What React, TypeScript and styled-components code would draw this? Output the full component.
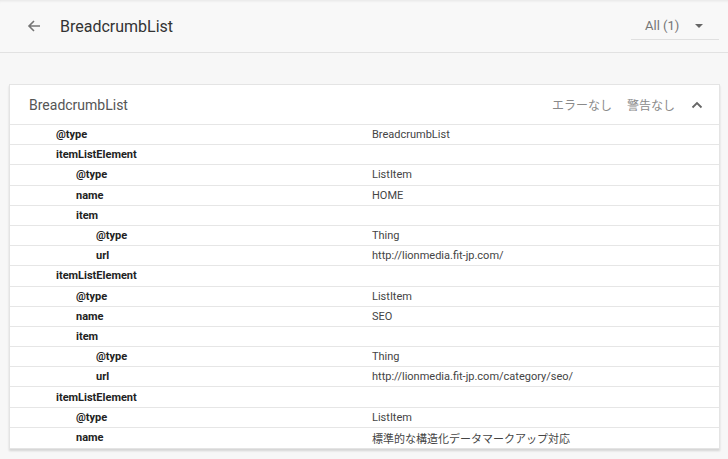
import styled, { createGlobalStyle } from 'styled-components'

const GlobalStyle = createGlobalStyle`
  html, body {
    margin: 0;
    padding: 0;
    background: #f7f7f7;
    font-family: Roboto, "Noto Sans CJK JP", sans-serif;
  }
`

interface rowData {
  label: string
  value?: string
  level: number
}

const ROWS: rowData[] = [
  { label: '@type', value: 'BreadcrumbList', level: 0 },
  { label: 'itemListElement', level: 0 },
  { label: '@type', value: 'ListItem', level: 1 },
  { label: 'name', value: 'HOME', level: 1 },
  { label: 'item', level: 1 },
  { label: '@type', value: 'Thing', level: 2 },
  { label: 'url', value: 'http://lionmedia.fit-jp.com/', level: 2 },
  { label: 'itemListElement', level: 0 },
  { label: '@type', value: 'ListItem', level: 1 },
  { label: 'name', value: 'SEO', level: 1 },
  { label: 'item', level: 1 },
  { label: '@type', value: 'Thing', level: 2 },
  { label: 'url', value: 'http://lionmedia.fit-jp.com/category/seo/', level: 2 },
  { label: 'itemListElement', level: 0 },
  { label: '@type', value: 'ListItem', level: 1 },
  { label: 'name', value: '標準的な構造化データマークアップ対応', level: 1 },
]

const Page = styled.div`
  width: 728px;
  height: 459px;
  overflow: hidden;
  display: flex;
  flex-direction: column;
`

const TopBar = styled.div`
  height: 53px;
  box-sizing: border-box;
  display: flex;
  align-items: center;
  padding: 0 8px 0 24px;
  background: #f8f8f8;
  border-bottom: 1px solid #e2e2e2;
  box-shadow: inset 0 3px 3px -2px rgba(0, 0, 0, 0.08);
`

const BackButton = styled.div`
  width: 20px;
  height: 20px;
  display: flex;
  align-items: center;
  justify-content: center;
  margin-right: 16px;
  color: #757575;
`

const PageTitle = styled.div`
  flex: 1;
  font-size: 16px;
  color: #333;
  padding-top: 1px;
`

const Select = styled.div`
  width: 88px;
  height: 28px;
  box-sizing: border-box;
  display: flex;
  align-items: center;
  justify-content: space-between;
  padding: 0 16px 0 14px;
  margin-top: 0;
  margin-right: 1px;
  border-bottom: 1px solid #e0e0e0;
  font-size: 13px;
  color: #757575;
`

const Caret = styled.div`
  width: 0;
  height: 0;
  border-left: 4px solid transparent;
  border-right: 4px solid transparent;
  border-top: 4px solid #666;
  margin-top: 1px;
`

const Body = styled.div`
  padding: 31px 8px 0 9px;
`

const Card = styled.div`
  background: #fff;
  border: 1px solid #e4e4e4;
  box-shadow: 0 2px 2px rgba(0, 0, 0, 0.14);
`

const CardHeader = styled.div`
  height: 39px;
  display: flex;
  align-items: center;
  padding: 0 16px 0 19px;
  border-bottom: 1px solid #e6e6e6;
`

const CardTitle = styled.div`
  flex: 1;
  font-size: 14px;
  letter-spacing: 0;
  color: #555;
`

const Status = styled.div`
  font-size: 12px;
  color: #8a8a8a;
  margin-left: 15px;
`

const Chevron = styled.div`
  margin-left: 16px;
  display: flex;
  align-items: center;
  color: #666;
`

const Row = styled.div`
  height: 20.2px;
  box-sizing: border-box;
  display: grid;
  grid-template-columns: 362px 1fr;
  align-items: center;
  border-bottom: 1px solid #e6e6e6;
  font-size: 11px;
  color: #333;
  &:last-child {
    border-bottom: none;
  }
`

const Label = styled.div<{ level: number }>`
  padding-left: ${({ level }) => 46 + level * 20}px;
  font-weight: 700;
  color: #222;
`

const Value = styled.div`
  color: #444;
`

export default function App() {
  return (
    <Page>
      <GlobalStyle />
      <TopBar>
        <BackButton>
          <svg width="16" height="16" viewBox="0 0 16 16">
            <path d="M14 8H3M8 3L3 8l5 5" fill="none" stroke="currentColor" strokeWidth="1.6" />
          </svg>
        </BackButton>
        <PageTitle>BreadcrumbList</PageTitle>
        <Select>
          All (1)
          <Caret />
        </Select>
      </TopBar>
      <Body>
        <Card>
          <CardHeader>
            <CardTitle>BreadcrumbList</CardTitle>
            <Status>エラーなし</Status>
            <Status>警告なし</Status>
            <Chevron>
              <svg width="12" height="8" viewBox="0 0 12 8">
                <path d="M1.5 6.5L6 2l4.5 4.5" fill="none" stroke="currentColor" strokeWidth="1.8" />
              </svg>
            </Chevron>
          </CardHeader>
          {ROWS.map((r, i) => (
            <Row key={i}>
              <Label level={r.level}>{r.label}</Label>
              <Value>{r.value}</Value>
            </Row>
          ))}
        </Card>
      </Body>
    </Page>
  )
}
